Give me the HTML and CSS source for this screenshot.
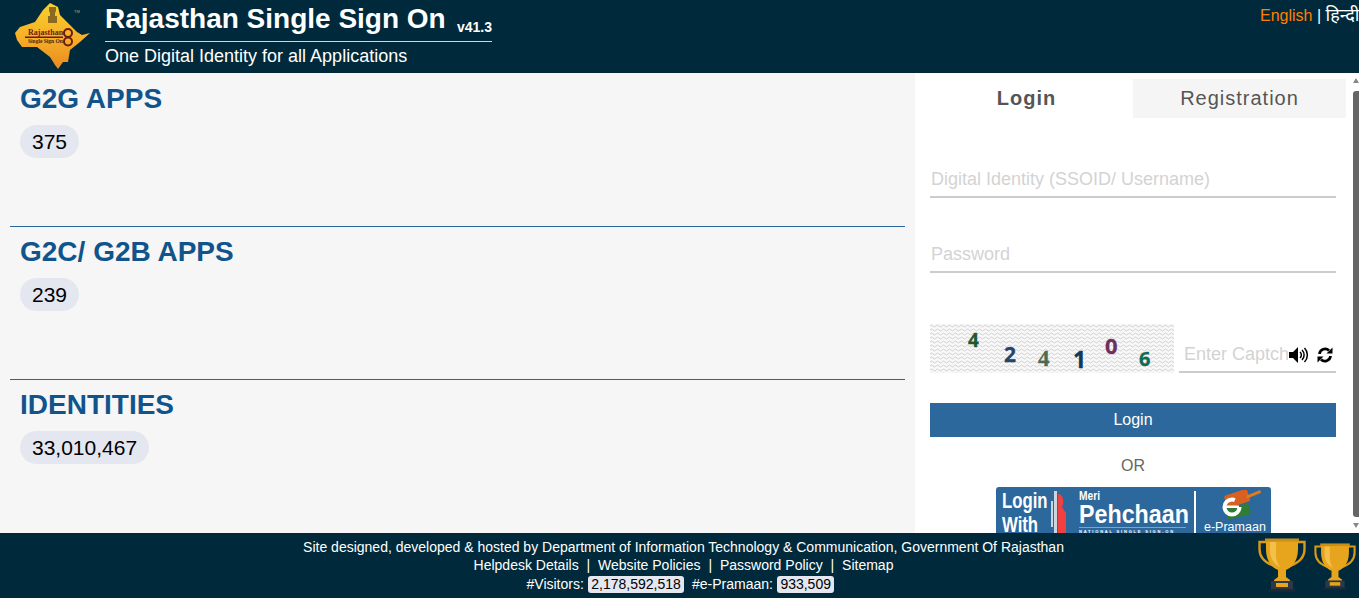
FILE: index.html
```html
<!DOCTYPE html>
<html lang="en">
<head>
    <meta charset="UTF-8">
    <meta name="viewport" content="width=device-width, initial-scale=1.0">
    <title>Rajasthan Single Sign On</title>
    <link rel="stylesheet" href="styles.css">
</head>
<body>
    <header class="top-bar">
        <svg class="logo" viewBox="0 0 92 72" width="92" height="72">
            <defs>
                <linearGradient id="mapFill" x1="0" y1="0" x2="0" y2="1">
                    <stop offset="0" stop-color="#f8d22c"/>
                    <stop offset="0.55" stop-color="#f6ae26"/>
                    <stop offset="1" stop-color="#e88a22"/>
                </linearGradient>
            </defs>
            <path fill="url(#mapFill)" d="M48 5L50 3L58 7L60 15L70 25L77 32L82 35L90 33L80 42L70 50L68 62L63 62L58 69L55 65L50 57L37 47L22 47L17 40L15 33L20 27L35 22L43 10z"/>
            <path fill="#8a6a20" d="M49 7h7v4l-1 2v3h2v7h-9v-7h2v-3l-1-2z"/>
            <text class="logo-name" x="28" y="35">Rajasthan</text>
            <rect x="25" y="36.500" width="38" height="1.500" fill="#6d1a12"/>
            <text class="logo-sub" x="28" y="43">Single Sign On</text>
            <circle cx="68" cy="33" r="4" fill="none" stroke="#6d1a12" stroke-width="2"/>
            <circle cx="68" cy="41.500" r="4" fill="none" stroke="#6d1a12" stroke-width="2"/>
            <text class="logo-tm" x="74" y="13">TM</text>
        </svg>
        <div class="brand">
            <div class="brand-title">
                <span class="brand-name">Rajasthan Single Sign On</span>
                <span class="brand-version">v41.3</span>
            </div>
            <div class="brand-tag">One Digital Identity for all Applications</div>
        </div>
        <div class="lang"><a class="lang-on" href="#">English</a> | <a class="lang-hi" href="#">हिन्दी</a></div>
    </header>

    <main class="content">
        <div class="stats">
            <section class="stat">
                <h2>G2G APPS</h2>
                <span class="pill">375</span>
            </section>
            <section class="stat">
                <h2>G2C/ G2B APPS</h2>
                <span class="pill">239</span>
            </section>
            <section class="stat">
                <h2>IDENTITIES</h2>
                <span class="pill">33,010,467</span>
            </section>
        </div>

        <aside class="login-panel">
            <div class="tabs">
                <div class="tab tab-active">Login</div>
                <div class="tab">Registration</div>
            </div>
            <form class="login-form">
                <input class="field" type="text" placeholder="Digital Identity (SSOID/ Username)">
                <input class="field field-pass" type="password" placeholder="Password">
                <div class="captcha-row">
                    <div class="captcha">
                        <svg class="captcha-bg" width="244" height="49">
                            <defs>
                                <pattern id="wave" width="6" height="4" patternUnits="userSpaceOnUse">
                                    <path d="M0 2q1.500-2 3 0t3 0" fill="none" stroke="#c6c6c6" stroke-width="0.800"/>
                                </pattern>
                            </defs>
                            <rect width="244" height="49" fill="#f8f8f8"/>
                            <rect width="244" height="49" fill="url(#wave)"/>
                        </svg>
                        <span class="d d1">4</span>
                        <span class="d d2">2</span>
                        <span class="d d3">4</span>
                        <span class="d d4">1</span>
                        <span class="d d5">0</span>
                        <span class="d d6">6</span>
                    </div>
                    <div class="captcha-input">
                        <input class="field field-captcha" type="text" placeholder="Enter Captcha">
                        <svg class="cap-icon" viewBox="0 0 20 16" width="20" height="16">
                            <path d="M0 5h4l5-5v16l-5-5H0z"/>
                            <path d="M11 5a4 4 0 0 1 0 6M13 3a7 7 0 0 1 0 10M15.500 1a10 10 0 0 1 0 14" fill="none" stroke="#000" stroke-width="1.500"/>
                        </svg>
                        <svg class="cap-icon" viewBox="0 0 16 16" width="16" height="16">
                            <path d="M2.500 7A5.600 5.600 0 0 1 12 3.500" fill="none" stroke="#000" stroke-width="2.800"/>
                            <path d="M15.500 0.500v6h-6z"/>
                            <path d="M13.500 9A5.600 5.600 0 0 1 4 12.500" fill="none" stroke="#000" stroke-width="2.800"/>
                            <path d="M0.500 15.500v-6h6z"/>
                        </svg>
                    </div>
                </div>
                <button class="login-btn" type="button">Login</button>
                <div class="or">OR</div>
                <div class="pehchaan">
                    <div class="ph-login">Login<br>With</div>
                    <svg class="ph-figure" viewBox="0 0 20 44" width="20" height="44">
                        <path fill="#c9d6e2" d="M4 0h3v44H4zM1 10h2v26H1z"/>
                        <path fill="#f04040" d="M8 3c4 0 6 5 5 10l-1 3 4 6v22H8z"/>
                    </svg>
                    <div class="ph-name">
                        <div class="ph-meri">Meri</div>
                        <div class="ph-big">Pehchaan</div>
                        <div class="ph-small">NATIONAL SINGLE SIGN-ON</div>
                    </div>
                    <div class="ph-epramaan">
                        <svg viewBox="0 0 46 30" width="46" height="30">
                            <rect x="9" y="2" width="24" height="13" rx="2" fill="#d9601f" transform="rotate(-18 21 8)"/>
                            <rect x="10" y="16" width="24" height="11" rx="2" fill="#2f7d32" transform="rotate(-14 22 21)"/>
                            <rect x="30" y="3" width="15" height="3" fill="#e07a22" transform="rotate(-22 37 4)"/>
                            <circle cx="16" cy="17" r="7.500" fill="none" stroke="#fff" stroke-width="4" stroke-dasharray="38 9"/>
                            <rect x="9" y="15.500" width="14" height="2.500" fill="#fff"/>
                        </svg>
                        <div>e-Pramaan</div>
                    </div>
                </div>
            </form>
            <div class="scroll-up"></div>
            <div class="scroll-thumb"></div>
            <div class="scroll-down"></div>
        </aside>
    </main>

    <footer class="site-footer">
        <div class="foot-text">
            <p>Site designed, developed &amp; hosted by Department of Information Technology &amp; Communication, Government Of Rajasthan</p>
            <p class="foot-links"><a href="#">Helpdesk Details</a> | <a href="#">Website Policies</a> | <a href="#">Password Policy</a> | <a href="#">Sitemap</a></p>
            <p class="foot-count">#Visitors: <span class="count">2,178,592,518</span> &nbsp;#e-Pramaan: <span class="count">933,509</span></p>
        </div>
        <div class="awards">
            <svg class="trophy" viewBox="0 0 48 54" width="48" height="54">
                <path d="M9 4H1.500v7c0 8 6 14 15 17M39 4h7.500v7c0 8-6 14-15 17" fill="none" stroke="#d99a18" stroke-width="2.400"/>
                <path fill="#e6a51c" d="M8 2h32v9c0 13-7 19-12 21v7l4 3v2H16v-2l4-3v-7C15 30 8 24 8 11z"/>
                <path fill="#f4c04c" d="M12 4h6v14c0 4 2 8 4 11-6-3-10-9-10-16z"/>
                <rect x="7" y="0.500" width="34" height="3" fill="#c98f16"/>
                <rect x="13" y="43" width="22" height="9" fill="#2c3a48"/>
                <rect x="11" y="51" width="26" height="2.500" fill="#1c2a38"/>
                <rect x="18" y="45" width="12" height="4" fill="#e6a51c"/>
            </svg>
            <svg class="trophy" viewBox="0 0 48 54" width="42" height="47">
                <path d="M9 4H1.500v7c0 8 6 14 15 17M39 4h7.500v7c0 8-6 14-15 17" fill="none" stroke="#d99a18" stroke-width="2.400"/>
                <path fill="#e6a51c" d="M8 2h32v9c0 13-7 19-12 21v7l4 3v2H16v-2l4-3v-7C15 30 8 24 8 11z"/>
                <path fill="#f4c04c" d="M12 4h6v14c0 4 2 8 4 11-6-3-10-9-10-16z"/>
                <rect x="7" y="0.500" width="34" height="3" fill="#c98f16"/>
                <rect x="13" y="43" width="22" height="9" fill="#2c3a48"/>
                <rect x="11" y="51" width="26" height="2.500" fill="#1c2a38"/>
                <rect x="18" y="45" width="12" height="4" fill="#e6a51c"/>
            </svg>
        </div>
    </footer>
</body>
</html>
```

FILE: styles.css
```css
* {
    margin: 0;
    padding: 0;
    box-sizing: border-box;
}

html, body {
    height: 100%;
    overflow: hidden;
}

body {
    display: flex;
    flex-direction: column;
    font-family: "Liberation Sans", Arial, "Noto Sans", sans-serif;
    background-color: #fff;
}

a {
    color: inherit;
    text-decoration: none;
}

/* header */
.top-bar {
    height: 73px;
    flex: none;
    display: flex;
    align-items: flex-start;
    background-color: #002a3c;
    color: #fff;
}

.logo {
    flex: none;
}

.logo-name {
    font-family: "Liberation Serif", serif;
    font-size: 8px;
    font-weight: bold;
    fill: #6d1a12;
}

.logo-sub {
    font-family: "Liberation Serif", serif;
    font-size: 5.500px;
    font-weight: bold;
    fill: #4b2414;
}

.logo-tm {
    font-size: 4px;
    fill: #b9a36a;
}

.brand {
    margin-left: 13px;
    width: 387px;
    flex: none;
}

.brand-title {
    display: flex;
    justify-content: space-between;
    align-items: flex-end;
    height: 42px;
    border-bottom: 1px solid #d5d5d5;
    padding-bottom: 7px;
}

.brand-name {
    font-size: 28px;
    font-weight: bold;
    line-height: 31px;
}

.brand-version {
    font-size: 14px;
    font-weight: bold;
    line-height: 16px;
    margin-bottom: -1px;
}

.brand-tag {
    font-size: 18px;
    line-height: 21px;
    margin-top: 4px;
}

.lang {
    margin-left: auto;
    font-size: 16px;
    line-height: 20px;
    margin-top: 5px;
    white-space: nowrap;
    width: 99px;
    overflow: hidden;
}

.lang-on {
    color: #ff7f00;
}

.lang-hi {
    font-size: 18px;
}

/* main area */
.content {
    flex: 1;
    min-height: 0;
    display: flex;
    overflow: hidden;
}

.stats {
    width: 915px;
    flex: none;
    background-color: #f6f6f6;
    padding: 1px 10px 0;
}

.stat {
    height: 153px;
    padding: 9px 10px 0;
    border-bottom: 1px solid #2c6699;
}

.stat:last-child {
    border-bottom: 0;
}

.stat h2 {
    font-size: 28px;
    line-height: 31px;
    color: #11548c;
    margin-bottom: 11px;
}

.pill {
    display: inline-block;
    height: 33px;
    line-height: 33px;
    padding: 0 12px;
    border-radius: 17px;
    background-color: #e4e7ef;
    color: #000;
    font-size: 21px;
}

/* login panel */
.login-panel {
    flex: 1;
    position: relative;
    background-color: #fff;
    overflow: hidden;
}

.tabs {
    display: flex;
    margin-top: 6px;
}

.tab {
    width: 213px;
    height: 39px;
    line-height: 38px;
    text-align: center;
    font-size: 20px;
    letter-spacing: 1px;
    color: #555;
    background-color: #f5f5f5;
}

.tab-active {
    width: 218px;
    padding-left: 5px;
    background-color: #fff;
    font-weight: bold;
}

.login-form {
    width: 406px;
    margin-left: 15px;
}

.field {
    display: block;
    width: 100%;
    height: 36px;
    border: 0;
    border-bottom: 2px solid #ccc;
    outline: 0;
    padding-left: 1px;
    font-family: inherit;
    font-size: 18px;
    background: transparent;
}

.field::placeholder {
    color: #d3d3d3;
    opacity: 1;
}

.login-form > .field:first-child {
    margin-top: 44px;
}

.field-pass {
    margin-top: 39px;
}

.captcha-row {
    display: flex;
    margin-top: 51px;
}

.captcha {
    position: relative;
    width: 244px;
    height: 49px;
    flex: none;
}

.captcha-bg {
    display: block;
}

.d {
    position: absolute;
    font-family: "Noto Sans", sans-serif;
    font-weight: bold;
    line-height: 1.2;
    -webkit-text-stroke: 0.3px currentColor;
}

.d1 { left: 38px; top: 5px; font-size: 19px; color: #1c5a32; }
.d2 { left: 74px; top: 18px; font-size: 21px; color: #24446b; }
.d3 { left: 108px; top: 21px; font-size: 23px; color: #4d6a52; font-family: "Liberation Serif", serif; }
.d4 { left: 143px; top: 22px; font-size: 23px; color: #0e3a5c; }
.d5 { left: 175px; top: 8px; font-size: 22px; color: #6e2f5f; }
.d6 { left: 209px; top: 23px; font-size: 20px; color: #0f6a54; }

.captcha-input {
    position: relative;
    flex: 1;
    margin-left: 5px;
    display: flex;
    align-items: center;
    justify-content: flex-end;
    gap: 8px;
    height: 49px;
    padding-right: 3px;
}

.field-captcha {
    position: absolute;
    left: 0;
    bottom: 0;
    padding-left: 5px;
    padding-right: 48px;
}

.cap-icon {
    position: relative;
    margin-top: 13px;
}

.login-btn {
    display: block;
    width: 100%;
    height: 34px;
    margin-top: 30px;
    border: 0;
    background-color: #2c689c;
    color: #fff;
    font-family: inherit;
    font-size: 16px;
}

.or {
    margin-top: 20px;
    text-align: center;
    font-size: 16px;
    line-height: 18px;
    color: #666;
}

.pehchaan {
    display: flex;
    width: 275px;
    height: 60px;
    margin: 12px 0 0 66px;
    padding: 4px 6px 0;
    background-color: #2c689c;
    border-radius: 3px;
    color: #fff;
    overflow: hidden;
}

.ph-login {
    width: 48px;
    flex: none;
    margin-top: -2px;
    font-weight: bold;
    font-size: 22px;
    line-height: 24px;
    transform: scaleX(0.76);
    transform-origin: left top;
}

.ph-figure {
    flex: none;
}

.ph-name {
    margin-left: 9px;
    width: 117px;
    flex: none;
    border-right: 2px solid #fff;
    height: 45px;
}

.ph-meri {
    font-weight: bold;
    font-size: 12px;
    line-height: 11px;
    white-space: nowrap;
    transform: scaleX(0.85);
    transform-origin: left top;
}

.ph-big {
    width: 115px;
    font-weight: bold;
    font-size: 25px;
    line-height: 25px;
    white-space: nowrap;
    transform: scaleX(0.93);
    transform-origin: left top;
    border-bottom: 1px solid #7fa5c6;
}

.ph-small {
    font-size: 4px;
    font-weight: bold;
    letter-spacing: 1.800px;
    line-height: 5px;
    white-space: nowrap;
    margin-top: 1px;
}

.ph-epramaan {
    margin-left: 8px;
    font-size: 12.500px;
    line-height: 14px;
    white-space: nowrap;
}

.ph-epramaan svg {
    display: block;
    margin: -1px 0 0 12px;
}

/* scrollbar drawn over the panel edge */
.scroll-thumb {
    position: absolute;
    top: 18px;
    right: 0;
    width: 6px;
    height: 426px;
    background-color: #666;
    border-radius: 3px 0 0 3px;
}

.scroll-up,
.scroll-down {
    position: absolute;
    right: 0;
    width: 0;
    height: 0;
    border-left: 3px solid transparent;
    border-right: 3px solid transparent;
}

.scroll-up {
    top: 5px;
    border-bottom: 5px solid #888;
}

.scroll-down {
    bottom: 5px;
    border-top: 5px solid #888;
}

/* footer */
.site-footer {
    height: 65px;
    flex: none;
    display: flex;
    background-color: #002a3c;
    color: #fff;
    position: relative;
}

.foot-text {
    width: 100%;
    padding-top: 5px;
    padding-left: 8px;
    text-align: center;
    font-size: 14px;
    line-height: 18px;
}

.foot-links a {
    margin: 0 4px;
}

.foot-count {
    padding-right: 6px;
    margin-top: 1px;
}

.count {
    display: inline-block;
    line-height: 17px;
    padding: 0 3.500px;
    background-color: #e4e7ef;
    color: #000;
    border-radius: 3px;
}

.awards {
    position: absolute;
    right: 3px;
    top: 5px;
    display: flex;
    align-items: flex-start;
    gap: 8px;
}

.awards .trophy:last-child {
    margin-top: 5px;
}
```
